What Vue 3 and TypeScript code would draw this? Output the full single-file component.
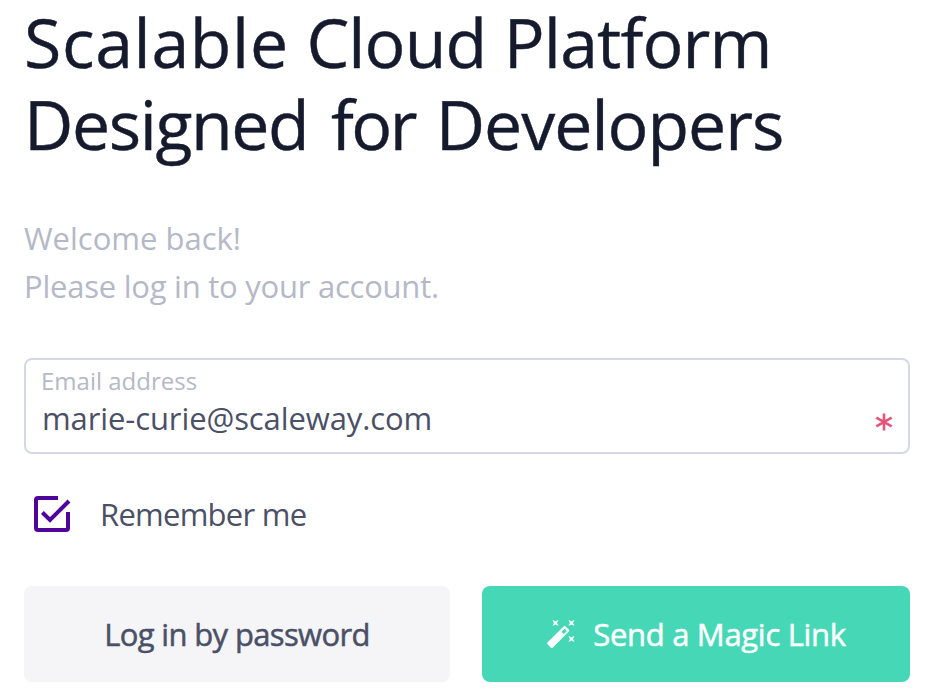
<script setup lang="ts">
import { ref } from 'vue'

const email = ref('marie-curie@scaleway.com')
const remember = ref(true)
</script>

<template>
  <main class="login">
    <h1 class="title">
      <span class="line"><span class="w-scalable">Scalable</span> <span class="w-cloud">Cloud</span> <span class="w-platform">Platform</span></span>
      <span class="line"><span class="w-designed">Designed</span> <span class="w-for">for</span> <span class="w-developers">Developers</span></span>
    </h1>
    <p class="intro">
      <span class="line">Welcome back!</span>
      <span class="line please">Please log in to your account.</span>
    </p>
    <div class="field">
      <div class="field-text">
        <span class="label">Email address</span>
        <span class="value">{{ email }}</span>
      </div>
      <svg class="required" viewBox="0 0 18 18">
        <path d="M9 .5v17M1.3 4.6l15.4 8.8M1.3 13.4l15.4-8.8" fill="none" stroke="#e5557a" stroke-width="2.6" />
      </svg>
    </div>
    <div class="remember" role="checkbox" :aria-checked="remember" @click="remember = !remember">
      <svg class="check" viewBox="0 0 40 40">
        <path d="M26 4H6Q4 4 4 6V34Q4 36 6 36H34Q36 36 36 34V18" fill="none" stroke="#4f0599" stroke-width="4" />
        <path v-if="remember" d="M10.4 18.5L18 26L37 7" fill="none" stroke="#4f0599" stroke-width="4" />
      </svg>
      <span class="remember-text">Remember me</span>
    </div>
    <div class="actions">
      <button class="btn secondary" type="button"><span class="password">Log in by password</span></button>
      <button class="btn primary" type="button">
        <svg class="wand" viewBox="0 0 30 30">
          <path fill-rule="evenodd" d="M17.6 7.4Q18.6 6.4 19.6 7.4L22.8 10.6Q23.8 11.6 22.8 12.6L6.9 28.4Q5.8 29.4 4.7 28.4L1.6 25.3Q.6 24.2 1.6 23.2ZM18.6 9.7L15.5 12.8L17.7 15L20.8 11.9Z" />
          <path d="M6.4 .8L9.5 2.4L12.6 .8L11 3.9L12.6 7L9.5 5.4L6.4 7L8 3.9ZM22.4 .8L25.5 2.4L28.6 .8L27 3.9L28.6 7L25.5 5.4L22.4 7L24 3.9ZM22.4 16.8L25.5 18.4L28.6 16.8L27 19.9L28.6 23L25.5 21.4L22.4 23L24 19.9Z" />
        </svg>
        <span class="magic">Send a Magic Link</span>
      </button>
    </div>
  </main>
</template>

<style>
body {
  margin: 0;
  background: #fff;
}
</style>

<style scoped>
.login {
  box-sizing: border-box;
  width: 926px;
  height: 698px;
  padding: 1px 16px 16px 24px;
  font-family: "Open Sans", "Noto Sans", sans-serif;
  color: #4b5066;
}
.line {
  display: block;
  white-space: nowrap;
}
.title {
  margin: 0;
  font-size: 68px;
  line-height: 82px;
  font-weight: 400;
  color: #151a2d;
  -webkit-text-stroke: 0.4px #151a2d;
}
.w-scalable {
  letter-spacing: 0.65px;
}
.w-cloud {
  letter-spacing: -0.9px;
}
.w-platform {
  letter-spacing: -0.85px;
}
.w-designed {
  letter-spacing: -1.4px;
  margin-right: 5px;
}
.w-for {
  letter-spacing: -2.5px;
  margin-right: 3px;
}
.w-developers {
  letter-spacing: -1px;
}
.intro {
  margin: 49px 0 0;
  font-size: 31px;
  line-height: 48px;
  color: #b5b8c7;
}
.please {
  letter-spacing: -0.24px;
}
.field {
  display: flex;
  justify-content: space-between;
  box-sizing: border-box;
  height: 96px;
  margin-top: 48px;
  padding: 3px 15px;
  border: 2px solid #d4d9e5;
  border-radius: 8px;
}
.field-text {
  display: flex;
  flex-direction: column;
}
.label {
  font-size: 24px;
  line-height: 36px;
  color: #b5b8c7;
}
.value {
  padding-left: 1px;
  font-size: 31px;
  line-height: 38px;
  letter-spacing: -0.1px;
}
.required {
  width: 18px;
  height: 18px;
  margin-top: 50px;
}
.remember {
  display: flex;
  align-items: center;
  gap: 28px;
  height: 48px;
  margin-top: 36px;
  padding-left: 8px;
  font-size: 31px;
}
.remember-text {
  letter-spacing: -0.75px;
}
.check {
  width: 40px;
  height: 40px;
}
.actions {
  display: grid;
  grid-template-columns: 426px 428px;
  gap: 32px;
  margin-top: 48px;
}
.btn {
  display: flex;
  align-items: center;
  justify-content: center;
  height: 96px;
  padding: 0;
  border: 0;
  border-radius: 8px;
  font: inherit;
  font-size: 31px;
  font-weight: 500;
  white-space: nowrap;
  -webkit-text-stroke: 0.5px currentColor;
}
.secondary {
  background: #f5f5f8;
  color: #4b5066;
}
.password {
  letter-spacing: -0.65px;
}
.primary {
  gap: 17px;
  background: #46d8b6;
  color: #fff;
}
.magic {
  letter-spacing: -0.3px;
}
.wand {
  width: 30px;
  height: 30px;
  fill: #fff;
}
</style>
